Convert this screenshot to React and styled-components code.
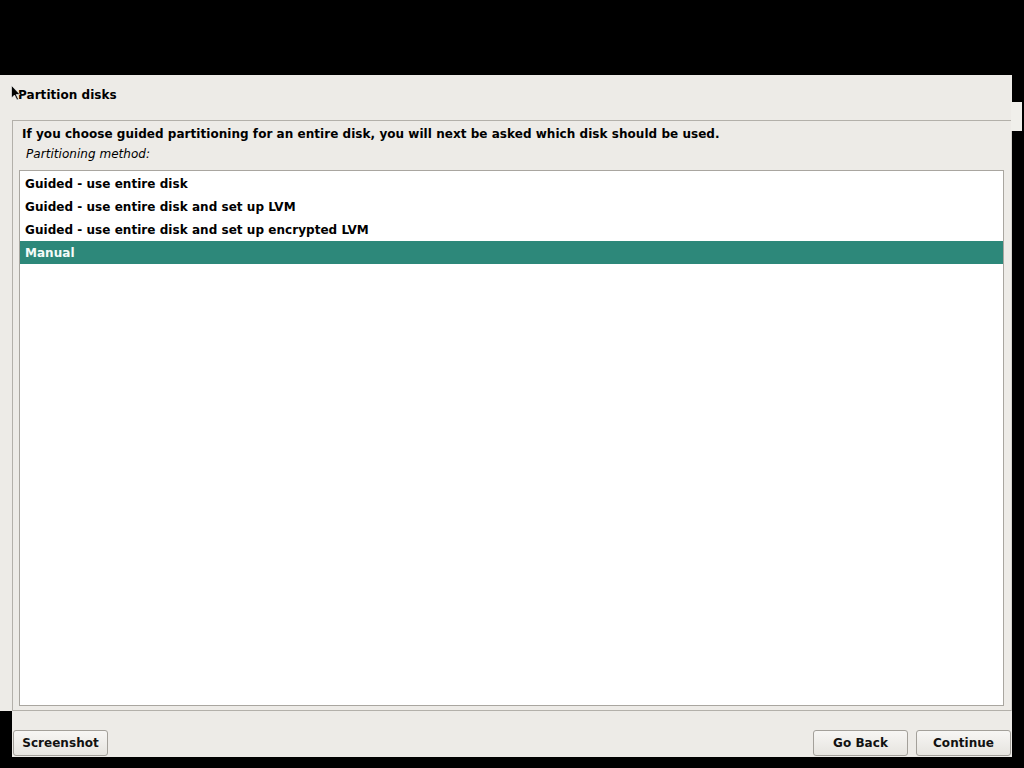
import React from 'react';
import styled, { createGlobalStyle } from 'styled-components';

const GlobalStyle = createGlobalStyle`
    html, body {
        margin: 0;
        padding: 0;
        background-color: #000;
        width: 1024px;
        height: 768px;
        overflow: hidden;
    }
    body {
        font-family: "DejaVu Sans", "Liberation Sans", sans-serif;
        font-size: 12px;
        letter-spacing: 0.04px;
        color: #000;
    }
`;

const Screen = styled('div')`
    position: relative;
    width: 1024px;
    height: 768px;
    padding-top: 75px;
    box-sizing: border-box;
`;

const Window = styled('div')`
    position: relative;
    width: 1012px;
    display: flex;
    flex-direction: column;
`;

const Title = styled('div')`
    height: 45px;
    background-color: #edebe7;
    padding-left: 18px;
    display: flex;
    align-items: center;
    font-weight: bold;
    font-size: 12px;
    box-sizing: border-box;
    padding-bottom: 6px;
`;

const Nub = styled('div')`
    position: absolute;
    left: 1011px;
    top: 27px;
    width: 11px;
    height: 29px;
    background-color: #f0efeb;
`;

const Body = styled('div')`
    background-color: #edebe7;
    padding-left: 12px;
`;

const Frame = styled('div')`
    height: 591px;
    border: 1px solid #b3b0aa;
    border-right-color: #d4d2cd;
    box-sizing: border-box;
    display: flex;
    flex-direction: column;
    padding: 0 7px 4px 6px;
`;

const Question = styled('div')`
    font-weight: bold;
    padding-left: 3px;
    margin-top: 5px;
    height: 19px;
    line-height: 17px;
`;

const Label = styled('div')`
    font-style: italic;
    padding-left: 7px;
    height: 18px;
    line-height: 18px;
`;

const ListBox = styled('div')`
    flex: 1;
    margin-top: 7px;
    background-color: #fff;
    border: 1px solid #a9a6a0;
    display: flex;
    flex-direction: column;
    padding-top: 1px;
`;

const Item = styled('div')`
    height: 23px;
    line-height: 25px;
    padding-left: 5px;
    font-weight: bold;
    background-color: ${props => (props.selected ? '#2d887a' : 'transparent')};
    color: ${props => (props.selected ? '#f4fbf9' : '#000')};
`;

const Footer = styled('div')`
    margin-left: 12px;
    height: 46px;
    background-color: #edebe7;
    display: flex;
    align-items: flex-end;
    justify-content: space-between;
    padding: 0 1px 1px 1px;
    box-sizing: border-box;
`;

const ButtonGroup = styled('div')`
    display: flex;
    gap: 8px;
`;

const Button = styled('button')`
    width: 95px;
    height: 26px;
    border: 1px solid #a3a09a;
    border-radius: 3px;
    background: linear-gradient(#f7f6f4, #e6e4df);
    font-family: "DejaVu Sans", "Liberation Sans", sans-serif;
    font-size: 12px;
    letter-spacing: 0.04px;
    font-weight: bold;
    color: #111;
    padding: 0;
    cursor: pointer;
`;

const Cursor = styled('svg')`
    position: absolute;
    left: 11px;
    top: 85px;
`;

const methods = [
    'Guided - use entire disk',
    'Guided - use entire disk and set up LVM',
    'Guided - use entire disk and set up encrypted LVM',
    'Manual',
];

const App = () => {
    return (
        <Screen>
            <GlobalStyle />
            <Window>
                <Title>Partition disks</Title>
                <Nub />
                <Body>
                    <Frame>
                        <Question>
                            If you choose guided partitioning for an entire disk, you will next be asked which disk should be used.
                        </Question>
                        <Label>Partitioning method:</Label>
                        <ListBox>
                            {methods.map(m => (
                                <Item key={m} selected={m === 'Manual'}>{m}</Item>
                            ))}
                        </ListBox>
                    </Frame>
                </Body>
                <Footer>
                    <Button>Screenshot</Button>
                    <ButtonGroup>
                        <Button>Go Back</Button>
                        <Button>Continue</Button>
                    </ButtonGroup>
                </Footer>
            </Window>
            <Cursor width="10" height="16" viewBox="0 0 10 16">
                <path d="M0.5 0.5 L0.5 13 L3.5 10 L6 15 L7.5 14.3 L5.2 9.5 L9 9.5 Z" fill="#000" stroke="#fff" strokeWidth="0.6" />
            </Cursor>
        </Screen>
    );
};

export default App;
